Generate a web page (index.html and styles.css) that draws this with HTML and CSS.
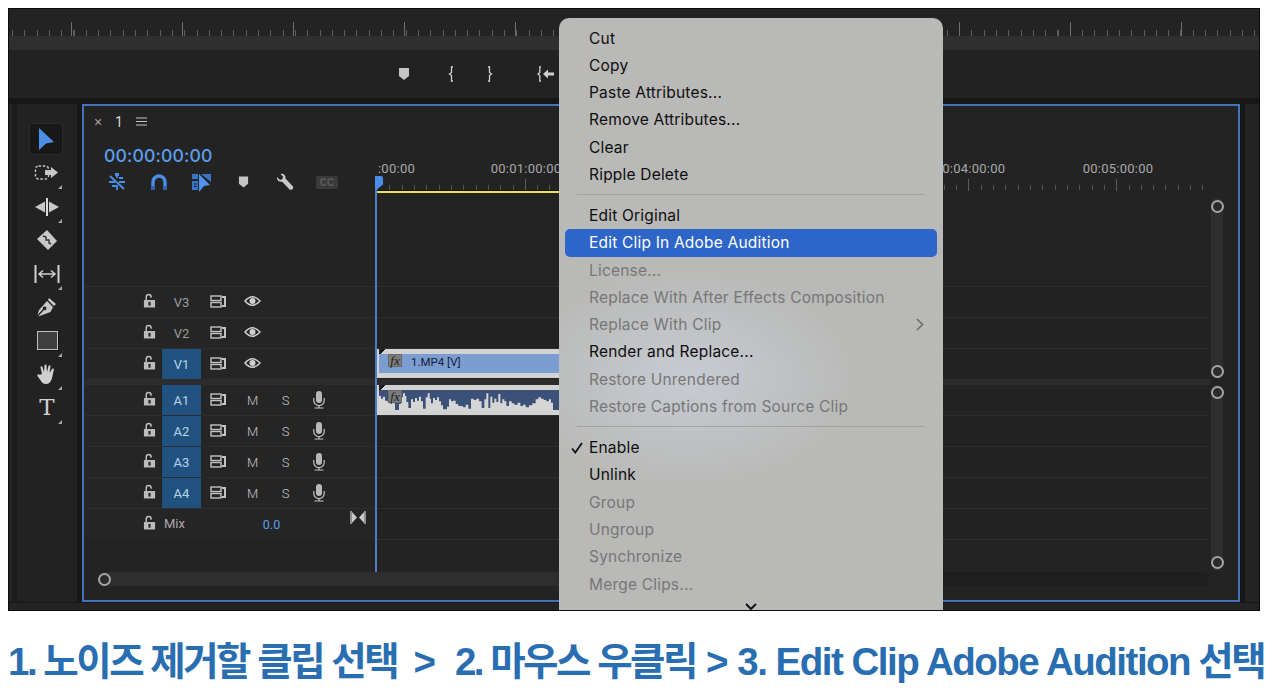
FILE: index.html
```html
<!DOCTYPE html>
<html lang="ko">
<head>
<meta charset="utf-8">
<title>Premiere Pro</title>
<link rel="stylesheet" href="styles.css">
</head>
<body>
<svg class="defs" width="0" height="0" aria-hidden="true">
  <symbol id="lock" viewBox="0 0 14 16"><path d="M3.5 8V4.2a2.6 2.6 0 0 1 5.2 0V5" fill="none" stroke="#bdbdbd" stroke-width="1.6"/><rect x="1" y="7.5" width="12" height="8" fill="#bdbdbd"/><rect x="5.8" y="9.5" width="2.4" height="4" fill="#2a2a2a"/></symbol>
  <symbol id="toggle" viewBox="0 0 17 13"><rect x="1" y="1" width="10" height="4.5" fill="none" stroke="#c4c4c4" stroke-width="1.4"/><rect x="1" y="7.5" width="10" height="4.5" fill="none" stroke="#c4c4c4" stroke-width="1.4"/><path d="M12 1h4v11h-4v-2h2V3h-2z" fill="#c4c4c4"/></symbol>
  <symbol id="eye" viewBox="0 0 17 12"><path d="M1 6Q8.500-2.500 16 6 8.500 14.500 1 6z" fill="none" stroke="#d0d0d0" stroke-width="1.5"/><circle cx="8.500" cy="6" r="3" fill="#d0d0d0"/></symbol>
  <symbol id="mic" viewBox="0 0 14 19"><rect x="4" y="1" width="6" height="12" rx="3" fill="#b8b8b8"/><path d="M1.800 8v2.500a5.200 5.200 0 0 0 10.400 0V8M7 16v2M2.500 18h9" fill="none" stroke="#c4c4c4" stroke-width="1.200"/></symbol>
  <symbol id="marker" viewBox="0 0 12 12"><path d="M1 0h10v8l-5 4-5-4z" fill="#c4c4c4"/></symbol>
</svg>

<main class="frame">
  <div class="top-ruler"></div>
  <div class="top-band"></div>
  <div class="transport">
    <svg class="ti ti-marker" width="12" height="12"><use href="#marker"/></svg>
    <svg class="ti ti-in" width="8" height="16" viewBox="0 0 8 16"><path d="M6 1H4.500v5.500L2.500 8l2 1.500V15H6" fill="none" stroke="#cfcfcf" stroke-width="1.300"/></svg>
    <svg class="ti ti-out" width="8" height="16" viewBox="0 0 8 16"><path d="M2 1h1.500v5.500l2 1.500-2 1.500V15H2" fill="none" stroke="#cfcfcf" stroke-width="1.300"/></svg>
    <svg class="ti ti-go" width="18" height="16" viewBox="0 0 18 16"><path d="M4 1H2.800v5.500L1 8l1.800 1.500V15H4" fill="none" stroke="#cfcfcf" stroke-width="1.300"/><path d="M6 8l5-4.500V6.500h6v3h-6v3z" fill="#cfcfcf"/></svg>
  </div>

  <div class="workspace">
    <div class="gutter-left"></div>
    <nav class="tools">
      <div class="tool active"><svg width="18" height="24" viewBox="0 0 18 24"><path d="M2 1l15 14-8 1.500L2 23z" fill="#4a8ee8"/></svg></div>
      <div class="tool more"><svg width="26" height="18" viewBox="0 0 26 18"><rect x="1.500" y="2" width="13" height="13" rx="3" fill="none" stroke="#c8c8c8" stroke-width="1.400" stroke-dasharray="2.500 1.800"/><path d="M11 6h6V3l7 5.500-7 5.500v-3h-6z" fill="#c8c8c8"/></svg></div>
      <div class="tool more"><svg width="26" height="20" viewBox="0 0 26 20"><path d="M1 10l10-5.500v11zM25 10l-10-5.500v11z" fill="#c8c8c8"/><path d="M13 1v18" stroke="#dcdcdc" stroke-width="2"/></svg></div>
      <div class="tool"><svg width="22" height="22" viewBox="0 0 22 22"><path d="M1 10L11 1l10 11-9 9z" fill="#c8c8c8"/><path d="M7 7l3 1v3h3v3l2 1" fill="none" stroke="#333" stroke-width="1.400"/></svg></div>
      <div class="tool more"><svg width="26" height="18" viewBox="0 0 26 18"><path d="M1.500 0v18M24.500 0v18" stroke="#d0d0d0" stroke-width="2"/><path d="M5 9h16M9 5.500L5 9l4 3.500M17 5.500l4 3.500-4 3.500" fill="none" stroke="#d0d0d0" stroke-width="1.500"/></svg></div>
      <div class="tool"><svg width="20" height="20" viewBox="0 0 20 20"><path d="M12 1l7 6-2 2-6-6zM10 4l6 6-2.500 5L4 18.500l-3 1 6-6.500a1.800 1.800 0 1 0-1-1l-5.500 6L2 13z" fill="#c8c8c8"/></svg></div>
      <div class="tool more"><span class="rect-tool"></span></div>
      <div class="tool more"><svg width="20" height="21" viewBox="0 0 20 21"><path d="M5 10L3.500 3.500a1 1 0 0 1 2-.5L7 8l.500-6.500a1 1 0 0 1 2 0L10 8l1.500-6a1 1 0 0 1 2 .5L12.500 9l2.500-4a1 1 0 0 1 1.800 1L15 14c-1 4-3 6-6 6-2.500 0-4-1-5-3l-3.500-5a1.200 1.200 0 0 1 2-1.300z" fill="#d0d0d0"/></svg></div>
      <div class="tool more"><span class="type-tool">T</span></div>
    </nav>
    <div class="gutter-mid"></div>

    <section class="timeline">
      <header class="tabbar">
        <span class="tab-x">×</span>
        <span class="tab-name">1</span>
        <svg width="11" height="9" viewBox="0 0 11 9"><path d="M0 1h11M0 4.500h11M0 8h11" stroke="#c4c4c4" stroke-width="1.100"/></svg>
      </header>

      <div class="tl-body">
        <div class="headers">
          <div class="hd-top">
            <div class="timecode">00:00:00:00</div>
            <div class="tl-tools">
              <span class="tt"><svg width="20" height="18" viewBox="0 0 20 18"><g stroke="#4a8ee8" stroke-width="1.800" fill="none"><path d="M3 3l14 13M10 1v4M2 9h6M12 9h6M5 13h4M12 5h4M10 12v5"/></g><rect x="8" y="0" width="4" height="3" fill="#4a8ee8"/></svg></span>
              <span class="tt"><svg width="16" height="17" viewBox="0 0 16 17"><path d="M2 16V8a6 6 0 0 1 12 0v8" fill="none" stroke="#4a8ee8" stroke-width="3.400"/><path d="M.3 12h3.400v4H.3zM12.300 12h3.400v4h-3.400z" fill="#2f63ad"/></svg></span>
              <span class="tt"><svg width="19" height="19" viewBox="0 0 19 19"><path d="M0 1h6v5H0zM0 8h6v9H0z" fill="#3a74c4"/><path d="M2 11h3M2 13.500h3" stroke="#232323" stroke-width="1"/><path d="M9 1h10v8z" fill="#3a74c4"/><path d="M7 1l11 11-6 1-5 6z" fill="#4f94f0"/></svg></span>
              <span class="tt"><svg width="11" height="12"><use href="#marker"/></svg></span>
              <span class="tt"><svg width="18" height="18" viewBox="0 0 18 18"><path d="M1 4l3 3 2.500-1L7 3.500 4.500 1c3-1 5.500 1.500 5 4.500l7.500 8c1 2-1.500 4-3.500 3l-7.500-8C3 9.500.5 7 1 4z" fill="#c8c8c8"/></svg></span>
              <span class="tt"><span class="cc">CC</span></span>
            </div>
          </div>

          <div class="track"><span class="lk"><svg width="13" height="15"><use href="#lock"/></svg></span><span class="lbl">V3</span><span class="ic"><svg width="17" height="13"><use href="#toggle"/></svg></span><span class="ic"><svg width="17" height="12"><use href="#eye"/></svg></span></div>
          <div class="track"><span class="lk"><svg width="13" height="15"><use href="#lock"/></svg></span><span class="lbl">V2</span><span class="ic"><svg width="17" height="13"><use href="#toggle"/></svg></span><span class="ic"><svg width="17" height="12"><use href="#eye"/></svg></span></div>
          <div class="track"><span class="lk"><svg width="13" height="15"><use href="#lock"/></svg></span><span class="lbl on">V1</span><span class="ic"><svg width="17" height="13"><use href="#toggle"/></svg></span><span class="ic"><svg width="17" height="12"><use href="#eye"/></svg></span></div>
          <div class="divider"></div>
          <div class="track"><span class="lk"><svg width="13" height="15"><use href="#lock"/></svg></span><span class="lbl on">A1</span><span class="ic"><svg width="17" height="13"><use href="#toggle"/></svg></span><span class="ic ms">M</span><span class="ic ms">S</span><span class="ic"><svg width="14" height="19"><use href="#mic"/></svg></span></div>
          <div class="track"><span class="lk"><svg width="13" height="15"><use href="#lock"/></svg></span><span class="lbl on">A2</span><span class="ic"><svg width="17" height="13"><use href="#toggle"/></svg></span><span class="ic ms">M</span><span class="ic ms">S</span><span class="ic"><svg width="14" height="19"><use href="#mic"/></svg></span></div>
          <div class="track"><span class="lk"><svg width="13" height="15"><use href="#lock"/></svg></span><span class="lbl on">A3</span><span class="ic"><svg width="17" height="13"><use href="#toggle"/></svg></span><span class="ic ms">M</span><span class="ic ms">S</span><span class="ic"><svg width="14" height="19"><use href="#mic"/></svg></span></div>
          <div class="track"><span class="lk"><svg width="13" height="15"><use href="#lock"/></svg></span><span class="lbl on">A4</span><span class="ic"><svg width="17" height="13"><use href="#toggle"/></svg></span><span class="ic ms">M</span><span class="ic ms">S</span><span class="ic"><svg width="14" height="19"><use href="#mic"/></svg></span></div>
          <div class="track mix"><span class="lk"><svg width="13" height="15"><use href="#lock"/></svg></span><span class="mix-name">Mix</span><span class="mix-val">0.0</span><svg class="bowtie" width="16" height="13" viewBox="0 0 16 13"><path d="M1 0v13M15 0v13" stroke="#bbb" stroke-width="1.400"/><path d="M2 1l5 5.500-5 5.500zM14 1L9 6.500l5 5.500z" fill="#c8c8c8"/></svg></div>
        </div>

        <div class="sequence">
          <div class="ruler">
            <div class="ruler-labels"><span class="first">:00:00</span><span>00:01:00:00</span><span></span><span></span><span>00:04:00:00</span><span>00:05:00:00</span></div>
            <div class="ruler-ticks"></div>
          </div>
          <div class="workarea"></div>
          <div class="seq-main">
            <div class="lanes">
              <div class="lane-space"></div>
              <div class="lane"></div>
              <div class="lane"></div>
              <div class="lane"><div class="clip clip-v"><span class="fx">fx</span><span class="clip-name">1.MP4 [V]</span></div></div>
              <div class="divider"></div>
              <div class="lane"><div class="clip clip-a"><span class="fx">fx</span><svg class="wave" viewBox="30 150 540 60" preserveAspectRatio="none"><path fill="#d6d6d6" d="M30 210V168H36V176H42V170H48V182H56V186H62V178H72V190H78V210H90V192H96V172H102V160H108V168H112V186H118V204H126V178H132V186H138V174H144V182H150V170H156V184H162V206H170V172H176V160H182V176H186V190H192V174H198V180H204V172H210V184H216V196H222V208H234V200H240V178H246V184H252V182H260V192H268V198H282V202H290V194H298V206H306V176H314V180H322V176H330V184H338V204H346V178H352V160H358V204H364V170H370V188H376V176H382V186H388V162H394V190H400V178H406V184H412V198H420V184H428V190H436V194H446V188H454V198H462V194H470V202H480V196H490V190H500V178H508V172H516V176H524V180H532V184H540V178H546V188H552V210H570V210Z"/></svg></div></div>
              <div class="lane"></div>
              <div class="lane"></div>
              <div class="lane"></div>
              <div class="lane lane-mix"></div>
            </div>
            <div class="vscrolls">
              <div class="vscroll vs-top"><span class="knob"></span><span class="knob"></span></div>
              <div class="vscroll vs-bottom"><span class="knob"></span><span class="knob"></span></div>
            </div>
          </div>
          <div class="playhead"></div>
        </div>
      </div>

      <div class="hscroll"><span class="knob"></span></div>
    </section>
    <div class="gutter-right"></div>
  </div>
  <div class="bottom-bar"></div>

  <div class="menu">
    <div class="item">Cut</div>
    <div class="item">Copy</div>
    <div class="item">Paste Attributes...</div>
    <div class="item">Remove Attributes...</div>
    <div class="item">Clear</div>
    <div class="item">Ripple Delete</div>
    <div class="sep"></div>
    <div class="item">Edit Original</div>
    <div class="item selected">Edit Clip In Adobe Audition</div>
    <div class="item off">License...</div>
    <div class="item off">Replace With After Effects Composition</div>
    <div class="item off">Replace With Clip<svg class="chev" width="8" height="13" viewBox="0 0 8 13"><path d="M1 1l5.500 5.500L1 12" fill="none" stroke="#6f6f6f" stroke-width="1.700"/></svg></div>
    <div class="item">Render and Replace...</div>
    <div class="item off">Restore Unrendered</div>
    <div class="item off">Restore Captions from Source Clip</div>
    <div class="sep"></div>
    <div class="item"><svg class="check" width="12" height="12" viewBox="0 0 12 12"><path d="M1 6.500L4.300 10.500 11 1" fill="none" stroke="#111" stroke-width="1.800"/></svg>Enable</div>
    <div class="item">Unlink</div>
    <div class="item off">Group</div>
    <div class="item off">Ungroup</div>
    <div class="item off">Synchronize</div>
    <div class="item off">Merge Clips...</div>
    <svg class="more-down" width="14" height="8" viewBox="0 0 14 8"><path d="M2 1l5 5 5-5" fill="none" stroke="#111" stroke-width="2"/></svg>
  </div>
</main>

<p class="caption">1. 노이즈 제거할 클립 선택  <span class="gt">&gt;</span>  2. 마우스 우클릭 <span class="gt2">&gt;</span> <span class="latin">3. Edit Clip Adobe Audition</span> 선택</p>
</body>
</html>
```
FILE: styles.css
```css
html, body { overflow: hidden; }
body { margin: 8px; background: #fff; font-family: "Liberation Sans", "Noto Sans CJK KR", sans-serif; }
.defs { position: absolute; }

.frame {
  position: relative;
  width: 1252px;
  height: 603px;
  box-sizing: border-box;
  border: 1px solid #0c0c0c;
  background: #232323;
  overflow: hidden;
  display: flex;
  flex-direction: column;
}

.top-ruler {
  height: 27px;
  flex: none;
  background-color: #232323;
  background-image:
    repeating-linear-gradient(90deg, transparent 0 62px, #6e6e6e 62px 63px, transparent 63px 111px),
    repeating-linear-gradient(90deg, #5e5e5e 0 1px, transparent 1px 12.3px);
  background-size: 100% 14px, 100% 6px;
  background-position: 0 13px, 3px 21px;
  background-repeat: no-repeat;
}
.top-band { height: 14px; flex: none; background: #2f2f2f; }

.transport {
  height: 48px;
  flex: none;
  display: flex;
  align-items: center;
  padding-left: 389px;
  background: #222;
}
.ti { flex: none; margin-top: -1px; }
.ti-in { margin-left: 37px; }
.ti-out { margin-left: 31px; }
.ti-go { margin-left: 43px; }

.workspace { flex: 1; display: flex; min-height: 0; background: #161616; padding-top: 6px; padding-bottom: 1px; }
.gutter-left { width: 3px; background: #232323; border-right: 5px solid #1b1b1b; flex: none; }
.tools { width: 60px; flex: none; background: #222; display: flex; flex-direction: column; padding-top: 19px; box-sizing: border-box; }
.gutter-mid { width: 5px; flex: none; }
.gutter-right { width: 14px; flex: none; margin-left: 5px; background: #232323; }
.bottom-bar { height: 7px; flex: none; background: #232323; }

.tool { position: relative; height: 33.500px; flex: none; display: flex; align-items: center; justify-content: center; }
.tool.active { width: 34px; height: 32px; margin: 0 0 1.500px 12px; box-sizing: border-box; background: #181818; border: 1px solid #2b2b2b; border-radius: 4px; }
.tool.more::after {
  content: "";
  position: absolute;
  right: 15px;
  bottom: 1px;
  border-left: 4px solid transparent;
  border-bottom: 4px solid #a8a8a8;
}
.rect-tool { width: 19px; height: 17px; background: #3f3f3f; border: 1.500px solid #c0c0c0; box-shadow: 1px 1px 0 #111; }
.type-tool { font: 23px/1 "DejaVu Serif", serif; color: #d0d0d0; }

.timeline {
  flex: 1;
  min-width: 0;
  box-sizing: border-box;
  border: 2px solid #4373bd;
  background: #232323;
  display: flex;
  flex-direction: column;
}
.tabbar { height: 34px; flex: none; box-sizing: border-box; padding: 0 0 3px 10px; display: flex; align-items: center; color: #d8d8d8; font-size: 13px; }
.tab-x { font-size: 14px; color: #aaa; width: 21px; }
.tab-name { width: 21px; font: 14px "Roboto", sans-serif; }

.tl-body { flex: 1; display: flex; min-height: 0; }
.headers { width: 292px; flex: none; }
.hd-top { height: 146px; box-sizing: border-box; padding: 1px 0 0 20px; }
.timecode { font: 500 17.700px/30px "Inter", sans-serif; color: #5a9fec; letter-spacing: .1px; }
.tl-tools { display: flex; margin-left: -8px; height: 22px; }
.tt { width: 42px; flex: none; display: flex; align-items: center; justify-content: center; }
.cc { font: 700 10px/13px "Liberation Sans", sans-serif; color: #5c5c5c; background: #3a3a3a; padding: 0 4px; border-radius: 2px; }

.track {
  height: 31px;
  box-sizing: border-box;
  border-top: 1px solid #2d2d2d;
  display: grid;
  grid-template-columns: 78px 39px 35px 33px 33px 34px;
  align-items: center;
  background: #252525;
  color: #c0c0c0;
}
.lk { justify-self: end; padding-right: 6px; padding-bottom: 4px; display: flex; }
.lbl { align-self: stretch; display: flex; align-items: center; justify-content: center; font: 13px "Roboto", sans-serif; color: #9b9b9b; }
.lbl.on { background: #21527f; color: #b9d2ea; }
.ic { display: flex; align-items: center; justify-content: center; padding-bottom: 2px; }
.ms { font: 300 13px "Roboto", sans-serif; color: #c4c4c4; padding-bottom: 0; }
.divider { height: 5px; background: #2c2c2c; }
.mix { position: relative; height: 32px; }
.mix-name { font: 13px "Roboto", sans-serif; color: #aaa; padding-left: 2px; padding-bottom: 3px; }
.mix-val { font: 12.500px "Roboto", sans-serif; color: #5a9fec; grid-column: 4 / 5; justify-self: center; white-space: nowrap; padding-left: 38px; }
.bowtie { position: absolute; right: 10px; top: 2px; }

.sequence { flex: 1; min-width: 0; position: relative; }
.ruler { height: 51px; overflow: hidden; }
.ruler-labels { display: flex; margin-left: -72px; padding-top: 22px; height: 14px; }
.ruler-labels span { width: 148px; flex: none; text-align: center; font: 13px/14px "Roboto", sans-serif; letter-spacing: .25px; color: #a8a8a8; white-space: nowrap; }
.ruler-labels .first { text-align: right; box-sizing: border-box; padding-right: 37px; }
.ruler-ticks {
  height: 12px;
  margin-top: 3px;
  margin-right: 35px;
  background-image:
    repeating-linear-gradient(90deg, #5c5c5c 0 1px, transparent 1px 147.800px),
    repeating-linear-gradient(90deg, #555 0 1px, transparent 1px 12.320px);
  background-size: 100% 12px, 100% 5px;
  background-position: 1px 0, 1px 6px;
  background-repeat: no-repeat;
}
.workarea { height: 2px; background: #ece24a; margin-right: 650px; box-shadow: 0 -1px 0 #111; }
.seq-main { display: flex; }
.lanes { width: 834px; flex: none; }
.lane-space { height: 93px; }
.lane { height: 31px; box-sizing: border-box; border-top: 1px solid #2d2d2d; background: #222; }
.lane-mix { height: 32px; border-bottom: 1px solid #2d2d2d; }
.clip { position: relative; height: 29px; width: 183px; box-sizing: border-box; border: solid #d2d2d2; border-width: 5px 0; }
.clip::before {
  content: "";
  position: absolute;
  left: 0;
  top: -5px;
  width: 6px;
  height: 5px;
  background: linear-gradient(140deg, #222 0 42%, #111 42% 58%, transparent 58%);
}
.clip-v { background: #7b9dd0; border-left: 3px solid #d2d2d2; display: flex; align-items: center; }
.clip-a { background: #3c5177; border-left: 3px solid #d2d2d2; height: 30px; }
.fx { position: absolute; left: 9px; top: 0; width: 14px; height: 13px; background: #7c7c7c; border: 1px solid #6a6a6a; box-sizing: border-box; font: italic 13px/11px "Liberation Serif", serif; color: #222; text-align: center; z-index: 1; }
.clip-name { padding-left: 32px; margin-bottom: 3px; font: 11.500px "Roboto", sans-serif; color: #10203a; }
.wave { display: block; width: 180px; height: 20px; }

.vscrolls { width: 12px; margin-left: 1px; margin-top: 5px; flex: none; display: flex; flex-direction: column; }
.vscroll { background: #2e2e2e; border-radius: 6px; display: flex; flex-direction: column; justify-content: space-between; align-items: center; box-sizing: border-box; flex: none; }
.vs-top { height: 181px; padding: 2px 0 1px; }
.vs-bottom { height: 186px; margin-top: 6px; padding: 1px 0 2px; }
.knob { width: 13px; height: 13px; box-sizing: border-box; border: 2.500px solid #a5a5a5; background: #2a2a2a; border-radius: 50%; flex: none; margin: 0 -1px; }

.playhead { position: absolute; left: -1px; top: 36px; width: 2px; height: 396px; background: #4a7cc8; }
.playhead::before {
  content: "";
  position: absolute;
  left: 0;
  top: 0;
  width: 8px;
  height: 13px;
  background: #4a8ee8;
  clip-path: polygon(0 0, 100% 0, 100% 65%, 30% 100%, 0 100%);
  border-radius: 2px 2px 0 0;
}

.hscroll {
  height: 14px;
  flex: none;
  margin: 0 29px 14px 15px;
  border-radius: 7px;
  display: flex;
  align-items: center;
  background: linear-gradient(90deg, #2e2e2e 0 45%, #1e1e1e 60%);
}

.menu {
  position: absolute;
  left: 550px;
  top: 9px;
  width: 384px;
  height: 593px;
  box-sizing: border-box;
  padding: 6.500px 6px;
  border-radius: 10px 10px 0 0;
  background:
    radial-gradient(ellipse 170px 110px at 130px 360px, #c7cbd2 0%, rgba(199,203,210,0) 100%),
    #b9b9b7;
  font: 15.500px/28.800px "Inter", "Liberation Sans", sans-serif;
  letter-spacing: .2px;
  color: #0e0e0e;
}
.item { position: relative; height: 27.300px; padding-left: 24px; border-radius: 5px; white-space: nowrap; }
.item.off { color: #777; }
.item.selected { background: #2d65c8; color: #fff; }
.sep { height: 14px; position: relative; margin-top: -.300px; }
.sep::after { content: ""; position: absolute; left: 12px; right: 12px; top: 6px; height: 1px; background: #a3a3a1; }
.chev { position: absolute; right: 13px; top: 7px; }
.check { position: absolute; left: 6px; top: 8px; }
.more-down { position: absolute; left: 185px; top: 585px; }

.caption {
  margin: 28px 0 0 0;
  font-size: 38.500px;
  line-height: 46px;
  font-weight: 700;
  letter-spacing: -2.500px;
  color: #2a6eb2;
  white-space: pre;
}
.gt { margin-right: 5px; }
.gt2 { margin: 0 3px 0 2px; }
.latin { letter-spacing: -1.500px; }
```
